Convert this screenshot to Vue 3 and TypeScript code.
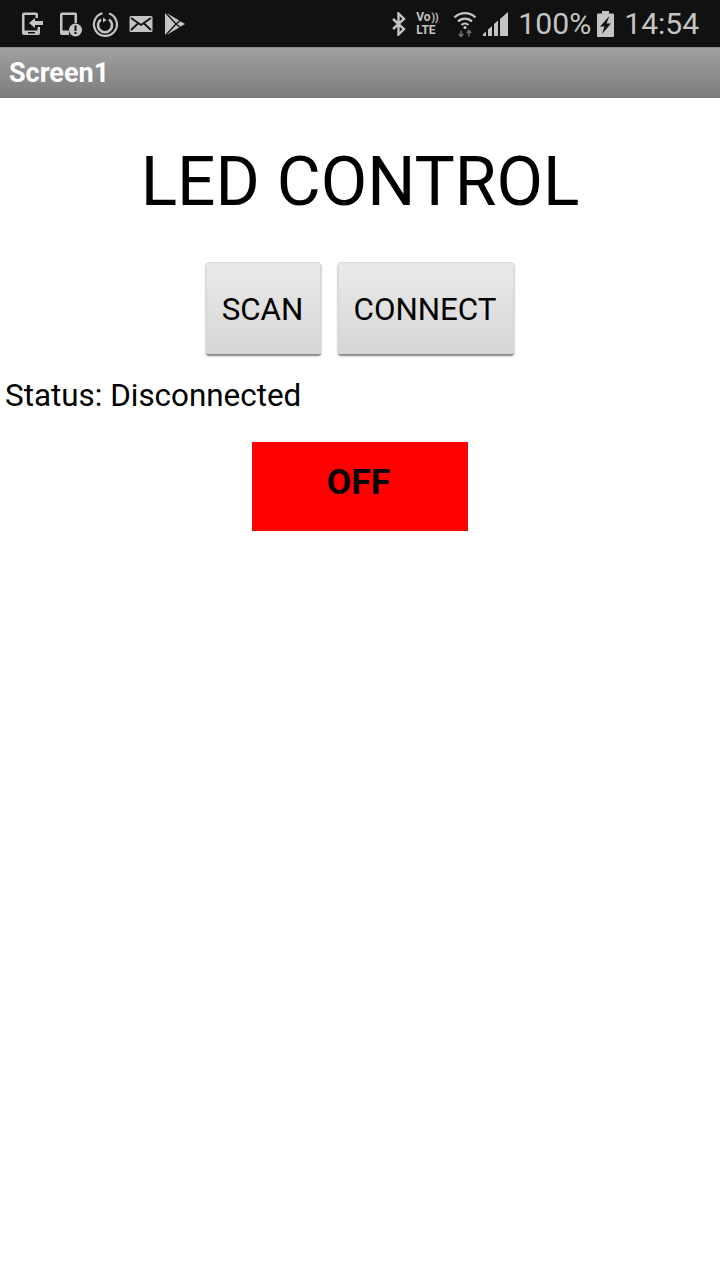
<script setup lang="ts">
// Bluetooth LED control screen
const title = 'LED CONTROL'
const status = 'Disconnected'
</script>

<template>
  <div class="screen">
    <div class="status-bar">
      <div class="status-left">
        <svg class="ic ic-tablet" width="24" height="26" viewBox="0 0 24 26">
          <path d="M2 3.500a2 2 0 0 1 2-2h12a2 2 0 0 1 2 2V7h-2.500V4H4.500v15.500h13V16H20v6a2 2 0 0 1-2 2H4a2 2 0 0 1-2-2z" fill="#c4c4c4" />
          <path d="M9 12l6-5v3h8v4h-8v3z" fill="#c4c4c4" />
          <rect x="8" y="21" width="7" height="1.500" fill="#111" />
        </svg>
        <svg class="ic" width="24" height="26" viewBox="0 0 24 26">
          <path d="M2 3.500a2 2 0 0 1 2-2h13a2 2 0 0 1 2 2V12h-2.500V4h-12v15.500H11V24H4a2 2 0 0 1-2-2z" fill="#c4c4c4" />
          <circle cx="17.500" cy="19" r="6.500" fill="#c4c4c4" />
          <rect x="16.500" y="14.500" width="2" height="5.500" fill="#111" />
          <rect x="16.500" y="21" width="2" height="2" fill="#111" />
        </svg>
        <svg class="ic ic-sync" width="26" height="26" viewBox="0 0 26 26" fill="none" stroke="#c4c4c4">
          <path d="M17 2.500a11.500 11.500 0 1 1-6.500-.2" stroke-width="2.200" />
          <path d="M9 8.500a7 7 0 1 0 8 0" stroke-width="2.600" />
          <path d="M11 6.500l3.500 2.500-3.500 2.500z" fill="#c4c4c4" stroke="none" />
        </svg>
        <svg class="ic" width="24" height="18" viewBox="0 0 24 18">
          <rect x="0.500" y="1" width="23" height="16" rx="1.500" fill="#c4c4c4" />
          <path d="M2 3l10 7 10-7M2 15l7-6.500M22 15l-7-6.500" fill="none" stroke="#111" stroke-width="1.800" />
        </svg>
        <svg class="ic" width="22" height="26" viewBox="0 0 22 26">
          <path d="M1 1l20 12L1 25z" fill="#c4c4c4" />
          <path d="M1 1l11 12L1 25M12 13l5-4M12 13l5 4" fill="none" stroke="#111" stroke-width="1.400" />
          <path d="M3 6v14l6.500-7z" fill="#c4c4c4" />
        </svg>
      </div>
      <div class="status-right">
        <svg class="ic-bt" width="16" height="24" viewBox="0 0 16 24" fill="none" stroke="#c4c4c4" stroke-width="2.400">
          <path d="M2 7l11 10-5.500 5.500v-21L13 7 2 17" />
        </svg>
        <div class="volte">
          <span class="vo">Vo<span class="vo-wave">))</span></span>
          <span class="lte">LTE</span>
        </div>
        <svg class="ic-wifi" width="24" height="26" viewBox="0 0 24 26" fill="none" stroke="#c4c4c4" stroke-width="2.200">
          <path d="M1.500 6.500a15 15 0 0 1 21 0M5 10.500a10 10 0 0 1 14 0M8.500 14a5 5 0 0 1 7 0" />
          <circle cx="12" cy="16.500" r="1.600" fill="#c4c4c4" stroke="none" />
          <path d="M8 19.500v6M5.800 23l2.200 2.500 2.200-2.500M16 25.500v-6M13.800 22l2.200-2.500 2.200 2.500" stroke="#6e6e6e" stroke-width="1.600" />
        </svg>
        <svg class="ic-sig" width="26" height="24" viewBox="0 0 26 24" fill="#c4c4c4">
          <path d="M0 24v-2l3-2.500V24zM5 24v-6.500l4-3.500v10zM11 24V12l4-3.500V24zM17 24V7l8-7v24z" />
        </svg>
        <span class="pct">100%</span>
        <svg class="ic-bat" width="17" height="26" viewBox="0 0 17 26">
          <path d="M5 0h7v2.500h4a1 1 0 0 1 1 1V25a1 1 0 0 1-1 1H1a1 1 0 0 1-1-1V3.500a1 1 0 0 1 1-1h4z" fill="#c4c4c4" />
          <path d="M12.500 5L3 15.500h4.500L5 23l9-10.500H9.500z" fill="#111" />
        </svg>
        <span class="clock">14:54</span>
      </div>
    </div>

    <div class="title-bar">Screen1</div>

    <main class="content">
      <h1 class="heading">{{ title }}</h1>
      <div class="actions">
        <button class="btn btn-scan">SCAN</button>
        <button class="btn btn-connect">CONNECT</button>
      </div>
      <p class="status-text">Status: {{ status }}</p>
      <div class="toggle-row">
        <button class="toggle">OFF</button>
      </div>
    </main>
  </div>
</template>

<style>
html,
body {
  margin: 0;
  background: #fff;
}
</style>

<style scoped>
.screen {
  display: flex;
  flex-direction: column;
  width: 720px;
  height: 1280px;
  overflow: hidden;
  background: #fff;
  font-family: Roboto, sans-serif;
  color: #000;
}

.status-bar {
  display: flex;
  align-items: center;
  justify-content: space-between;
  flex: none;
  box-sizing: border-box;
  height: 47px;
  padding: 0 21px 0 20px;
  background: #111;
  color: #c4c4c4;
}

.status-left {
  display: flex;
  align-items: center;
  gap: 11px;
}

.status-right {
  display: flex;
  align-items: center;
}

.ic {
  display: block;
}

.ic-tablet {
  margin-right: 3px;
}

.ic-sync {
  margin-left: -1px;
}

.ic-bt {
  margin-right: 9px;
}

.volte {
  display: flex;
  flex-direction: column;
  width: 26px;
  margin-right: 11px;
  font-size: 12px;
  font-weight: 700;
  line-height: 12px;
}

.vo-wave {
  font-size: 10px;
  margin-left: 1px;
}

.ic-wifi {
  margin-right: 6px;
}

.ic-sig {
  margin-right: 9px;
}

.pct,
.clock {
  font-size: 30px;
  line-height: 50px;
}

.pct {
  font-size: 30.2px;
}

.ic-bat {
  margin: 0 10px 0 6px;
}

.title-bar {
  flex: none;
  box-sizing: border-box;
  height: 51px;
  padding-left: 9px;
  border-top: 1px solid #8a8a8a;
  background: linear-gradient(#a0a0a0, #7c7c7c);
  color: #fff;
  font-size: 27px;
  font-weight: 700;
  line-height: 51px;
}

.content {
  display: flex;
  flex-direction: column;
  flex: 1;
}

.heading {
  margin: 45px 0 0;
  font-size: 67.6px;
  font-weight: 400;
  line-height: 78px;
  text-align: center;
}

.actions {
  display: flex;
  justify-content: center;
  gap: 17px;
  margin-top: 41px;
}

.btn {
  height: 92px;
  padding: 2px 2px 0 0;
  border: 1px solid #d8d8d8;
  border-radius: 3px;
  background: linear-gradient(#eaeaea, #d6d6d6);
  box-shadow: 0 2px 2px rgba(0, 0, 0, 0.5);
  font-family: inherit;
  font-size: 31.3px;
  color: #000;
}

.btn-scan {
  width: 115px;
}

.btn-connect {
  width: 176px;
}

.status-text {
  margin: 22px 0 0;
  padding-left: 5px;
  font-size: 31.4px;
  line-height: 40px;
}

.toggle-row {
  display: flex;
  justify-content: center;
  margin-top: 26px;
}

.toggle {
  width: 216px;
  height: 89px;
  padding: 0 3px 9px 0;
  border: none;
  background: #f00;
  font-family: inherit;
  font-size: 35.5px;
  font-weight: 700;
  color: #000;
}
</style>
